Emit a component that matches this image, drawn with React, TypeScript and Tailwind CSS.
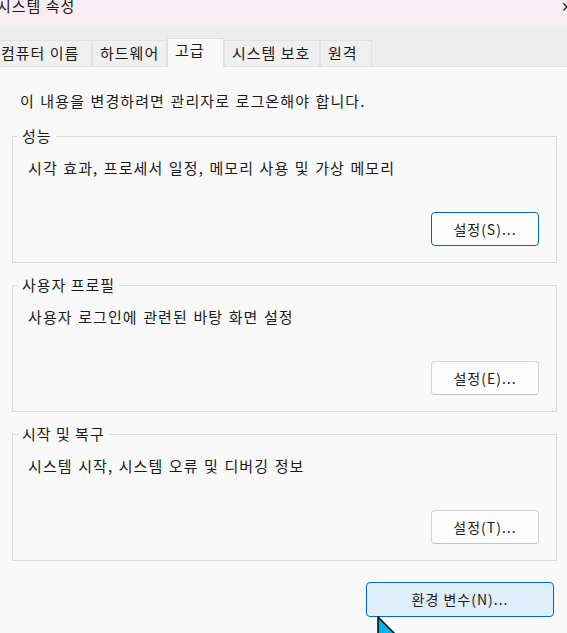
import React from "react";

const tabs = [
  { label: "컴퓨터 이름", w: "w-[99px] -ml-[7px]" },
  { label: "하드웨어", w: "w-[75px]" },
  { label: "고급", w: "w-[57px]", active: true },
  { label: "시스템 보호", w: "w-[96px]" },
  { label: "원격", w: "w-[52px]" },
];

const groups = [
  {
    title: "성능",
    desc: "시각 효과, 프로세서 일정, 메모리 사용 및 가상 메모리",
    button: "설정(S)...",
    focused: true,
  },
  {
    title: "사용자 프로필",
    desc: "사용자 로그인에 관련된 바탕 화면 설정",
    button: "설정(E)...",
  },
  {
    title: "시작 및 복구",
    desc: "시스템 시작, 시스템 오류 및 디버깅 정보",
    button: "설정(T)...",
  },
];

function GroupBox({
  title,
  desc,
  button,
  focused,
}: {
  title: string;
  desc: string;
  button: string;
  focused?: boolean;
}) {
  return (
    <fieldset className="border border-[#dcdcdc] mt-[13px] first-of-type:mt-[16px]">
      <legend className="ml-[5px] px-[4px] leading-[18px]">{title}</legend>
      <div className="pt-[13px] pl-[15px] leading-[20px] tracking-[1.1px] [word-spacing:1px]">{desc}</div>
      <div className="flex justify-end pr-[17px] pt-[34px] pb-[16px]">
        <button
          className={
            focused
              ? "w-[108px] h-[34px] rounded-[4px] border border-[#0067c0] bg-[#fdfdfd] text-[14px] tracking-[1px]"
              : "w-[108px] h-[34px] rounded-[4px] border border-[#d5d5d5] border-b-[#c2c2c2] bg-[#fdfdfd] text-[14px] tracking-[1px]"
          }
        >
          {button}
        </button>
      </div>
    </fieldset>
  );
}

export default function App() {
  return (
    <div className="relative w-[567px] h-[633px] overflow-hidden bg-[#f9f9f9] text-[15px] tracking-[1px] text-[#1a1a1a] font-['Noto_Sans_CJK_KR','Noto_Sans',sans-serif]">
      {/* title bar */}
      <div className="h-[27px] bg-[#f8edf2] flex justify-between overflow-hidden">
        <div className="-ml-[3px] -mt-[4px] leading-[20px] whitespace-nowrap">시스템 속성</div>
        <div className="-mr-[7px] -mt-[4px] leading-[20px] text-[14px]">✕</div>
      </div>

      {/* tabs */}
      <div className="h-[40px] bg-[#eeeeee] border-b border-[#e1e1e1] flex items-end">
        {tabs.map((t) =>
          t.active ? (
            <div
              key={t.label}
              className={`${t.w} h-[29px] -mb-px bg-[#f9f9f9] border border-b-0 border-[#e1e1e1] pl-[7px] pt-[1px] leading-[20px] whitespace-nowrap`}
            >
              {t.label}
            </div>
          ) : (
            <div
              key={t.label}
              className={`${t.w} h-[26px] bg-[#f0f0f0] border border-b-0 border-[#e1e1e1] pl-[7px] pt-[2px] leading-[20px] whitespace-nowrap`}
            >
              {t.label}
            </div>
          )
        )}
      </div>

      {/* content */}
      <div className="pl-[12px] pr-[10px] pt-[24px] flex flex-col">
        <p className="ml-[8px] leading-[20px] tracking-[1.1px] [word-spacing:1px]">
          이 내용을 변경하려면 관리자로 로그온해야 합니다.
        </p>
        {groups.map((g) => (
          <GroupBox key={g.title} {...g} />
        ))}
        <div className="flex justify-end mt-[21px] pr-[3px]">
          <button className="w-[188px] h-[35px] rounded-[4px] border border-[#0067c0] bg-[#e0eef9] text-[14px] tracking-[1px]">
            환경 변수(N)...
          </button>
        </div>
      </div>

      {/* mouse pointer */}
      <svg
        className="absolute left-[377px] top-[616px]"
        width="24"
        height="34"
        viewBox="0 0 24 34"
      >
        <path
          d="M1 1 L1 26 L7 20 L11 30 L15 28 L11 19 L19 19 Z"
          fill="#00b4f0"
          stroke="#000"
          strokeWidth="1.5"
          strokeLinejoin="miter"
        />
      </svg>
    </div>
  );
}
